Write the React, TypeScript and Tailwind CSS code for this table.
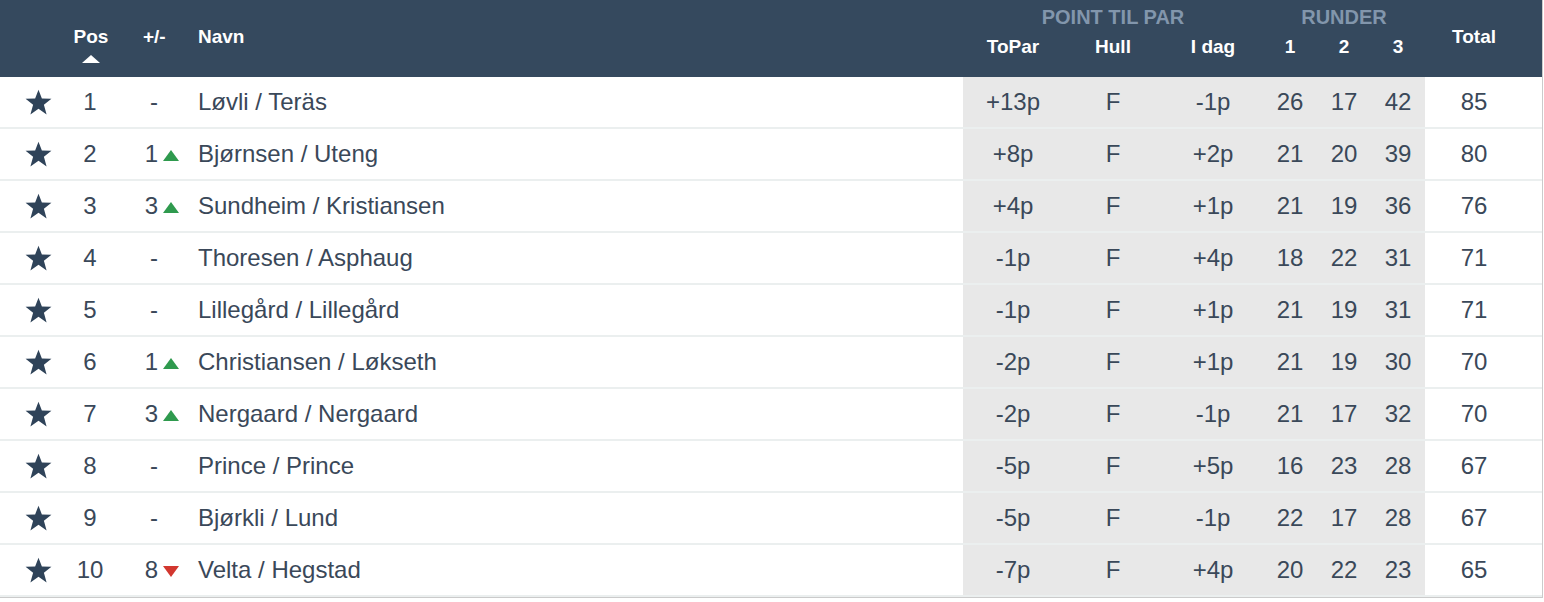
import React from 'react'

type Row = {
  pos: number
  diff: number | null
  dir?: 'up' | 'down'
  name: string
  toPar: string
  hull: string
  today: string
  r: [number, number, number]
  total: number
}

const rows: Row[] = [
  { pos: 1, diff: null, name: 'Løvli / Teräs', toPar: '+13p', hull: 'F', today: '-1p', r: [26, 17, 42], total: 85 },
  { pos: 2, diff: 1, dir: 'up', name: 'Bjørnsen / Uteng', toPar: '+8p', hull: 'F', today: '+2p', r: [21, 20, 39], total: 80 },
  { pos: 3, diff: 3, dir: 'up', name: 'Sundheim / Kristiansen', toPar: '+4p', hull: 'F', today: '+1p', r: [21, 19, 36], total: 76 },
  { pos: 4, diff: null, name: 'Thoresen / Asphaug', toPar: '-1p', hull: 'F', today: '+4p', r: [18, 22, 31], total: 71 },
  { pos: 5, diff: null, name: 'Lillegård / Lillegård', toPar: '-1p', hull: 'F', today: '+1p', r: [21, 19, 31], total: 71 },
  { pos: 6, diff: 1, dir: 'up', name: 'Christiansen / Løkseth', toPar: '-2p', hull: 'F', today: '+1p', r: [21, 19, 30], total: 70 },
  { pos: 7, diff: 3, dir: 'up', name: 'Nergaard / Nergaard', toPar: '-2p', hull: 'F', today: '-1p', r: [21, 17, 32], total: 70 },
  { pos: 8, diff: null, name: 'Prince / Prince', toPar: '-5p', hull: 'F', today: '+5p', r: [16, 23, 28], total: 67 },
  { pos: 9, diff: null, name: 'Bjørkli / Lund', toPar: '-5p', hull: 'F', today: '-1p', r: [22, 17, 28], total: 67 },
  { pos: 10, diff: 8, dir: 'down', name: 'Velta / Hegstad', toPar: '-7p', hull: 'F', today: '+4p', r: [20, 22, 23], total: 65 },
]

function Star() {
  return (
    <svg width="27" height="26" viewBox="0 0 24 23" className="fill-[#2f4359]">
      <polygon points="12,0.5 15,8.4 23.5,8.7 16.8,14 19.2,22.5 12,17.6 4.8,22.5 7.2,14 0.5,8.7 9,8.4" />
    </svg>
  )
}

function Arrow({ dir }: { dir: 'up' | 'down' }) {
  return dir === 'up' ? (
    <svg width="16" height="11" viewBox="0 0 16 11" className="fill-[#2f9a4e]">
      <polygon points="8,0 16,11 0,11" />
    </svg>
  ) : (
    <svg width="16" height="11" viewBox="0 0 16 11" className="fill-[#d2372f]">
      <polygon points="0,0 16,0 8,11" />
    </svg>
  )
}

export default function App() {
  return (
    <div className="w-[1543px] bg-white font-['Liberation_Sans',Arial,sans-serif] text-[#3a4859] border-r border-b border-[#cbcbcb]">
      {/* Header */}
      <div className="flex h-[77px] bg-[#35495e] text-white font-bold text-[19px] leading-[22px]">
        <div className="w-[62px]" />
        <div className="w-[58px] flex flex-col items-center pt-[26px]">
          <span>Pos</span>
          <svg width="18" height="8" viewBox="0 0 18 8" className="mt-[7px] fill-white">
            <polygon points="9,0 18,8 0,8" />
          </svg>
        </div>
        <div className="w-[70px] pt-[26px] pl-[23px]">+/-</div>
        <div className="flex-1 pt-[26px] pl-[8px]">Navn</div>
        <div className="w-[300px] flex flex-col pt-[6px]">
          <div className="text-center text-[20px] text-[#8296ac]">POINT TIL PAR</div>
          <div className="flex mt-[8px]">
            <div className="w-[100px] text-center">ToPar</div>
            <div className="w-[100px] text-center">Hull</div>
            <div className="w-[100px] text-center">I dag</div>
          </div>
        </div>
        <div className="w-[162px] flex flex-col pt-[6px]">
          <div className="text-center text-[20px] text-[#8296ac]">RUNDER</div>
          <div className="flex mt-[8px]">
            <div className="w-[54px] text-center">1</div>
            <div className="w-[54px] text-center">2</div>
            <div className="w-[54px] text-center">3</div>
          </div>
        </div>
        <div className="w-[98px] pt-[26px] text-center">Total</div>
        <div className="w-[19px]" />
      </div>

      {/* Rows */}
      {rows.map((row) => (
        <div key={row.pos} className="flex h-[52px] border-b-2 border-[#ebefef] text-[24px] items-stretch">
          <div className="w-[62px] flex items-center justify-center pl-[14px]">
            <Star />
          </div>
          <div className="w-[58px] flex items-center justify-center pr-[2px]">{row.pos}</div>
          <div className="w-[70px] flex items-center">
            <span className="w-[38px] text-right">{row.diff === null ? '-' : row.diff}</span>
            {row.dir && (
              <span className="ml-[5px] mt-[2px]">
                <Arrow dir={row.dir} />
              </span>
            )}
          </div>
          <div className="flex-1 flex items-center pl-[8px]">{row.name}</div>
          <div className="w-[462px] flex bg-[#e8e8e8]">
            <div className="w-[100px] flex items-center justify-center">{row.toPar}</div>
            <div className="w-[100px] flex items-center justify-center">{row.hull}</div>
            <div className="w-[100px] flex items-center justify-center">{row.today}</div>
            {row.r.map((v, i) => (
              <div key={i} className="w-[54px] flex items-center justify-center">
                {v}
              </div>
            ))}
          </div>
          <div className="w-[98px] flex items-center justify-center">{row.total}</div>
          <div className="w-[19px]" />
        </div>
      ))}
    </div>
  )
}
